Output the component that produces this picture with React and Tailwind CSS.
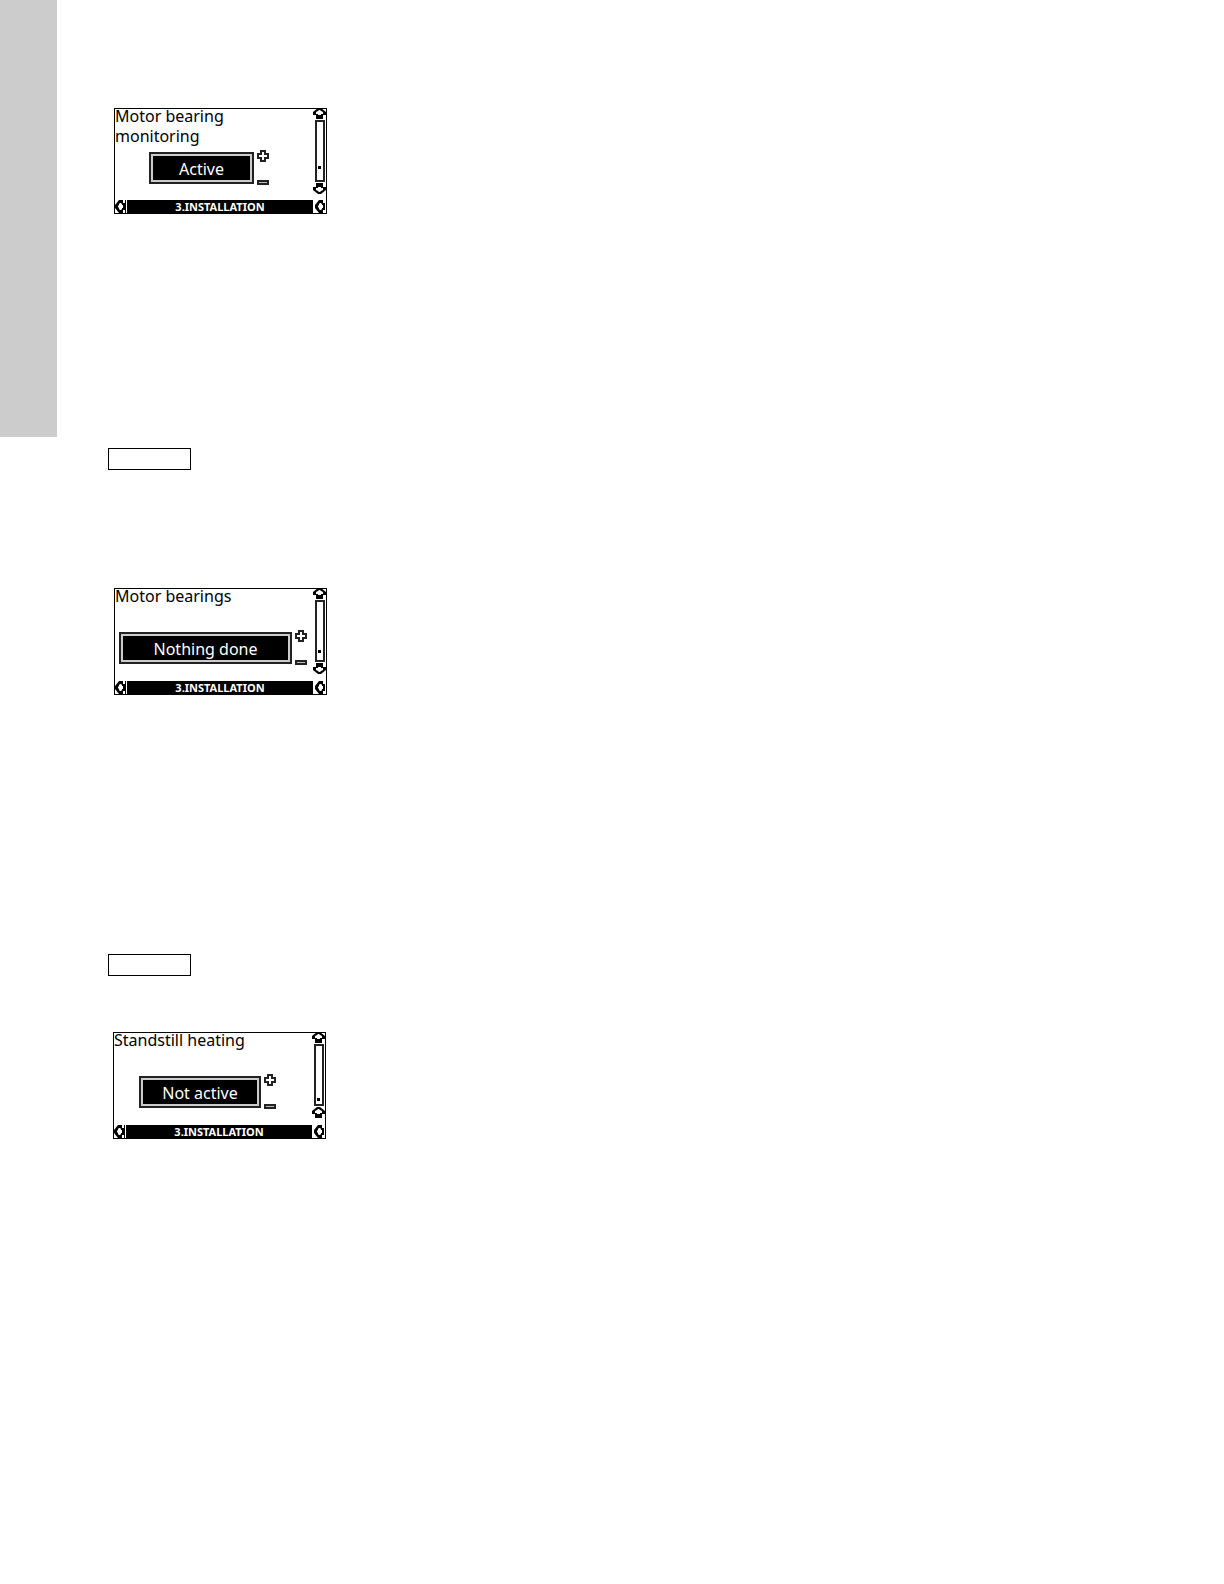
import React from "react";

const screens = [
  {
    title: "Motor bearing monitoring",
    value: "Active",
    row: "ml-[34px]",
    box: "w-[105px]",
    dot: "mb-[11px]",
    place: "ml-[6px] h-[106px]",
    lastArrow: "down",
  },
  {
    title: "Motor bearings",
    value: "Nothing done",
    row: "ml-[4px]",
    box: "w-[173px]",
    dot: "mb-[7px]",
    place: "mt-[118px] ml-[6px] h-[107px]",
    lastArrow: "down",
  },
  {
    title: "Standstill heating",
    value: "Not active",
    row: "ml-[25px]",
    box: "w-[122px]",
    dot: "mb-[3px]",
    place: "mt-[56px] ml-[5px] h-[107px]",
    lastArrow: "up",
  },
];

const Arrow = ({ down }) => (
  <svg viewBox="0 0 13 11" className={`block w-[13px] h-[11px] ${down ? "rotate-180" : ""}`}>
    <path d="M5 0H8L13 4V7H10V11H3V7H0V4Z" fill="black" />
    <path d="M5 3L6 2H7L8 3L10 4V6H8V7H5V6H3V4Z" fill="white" />
  </svg>
);

const Side = ({ divider }) => (
  <svg viewBox="0 0 11 13" className="block w-[11px] h-[13px]">
    <path d="M4 0H8V3H10V10H8V13H4L0 8V5Z" fill="black" />
    <path d="M4 4L5 3H6L7 4V5H8V8H7V9L6 10H5L4 9V8L3 7V6L4 5Z" fill="white" />
    {divider && <path d="M10 0H11V13H10Z" fill="black" />}
  </svg>
);

const Plus = () => (
  <svg viewBox="0 0 12 12" className="block w-3 h-3">
    <path d="M4 1H8V4H11V8H8V11H4V8H1V4H4Z" fill="white" stroke="#222" strokeWidth="2" />
  </svg>
);

const Minus = () => (
  <svg viewBox="0 0 12 5" className="block w-3 h-[5px]">
    <path d="M1 1H11V4H1Z" fill="#bbb" stroke="#222" strokeWidth="2" />
  </svg>
);

const Screen = ({ screen }) => (
  <section className={`w-[213px] border border-black flex flex-col ${screen.place}`}>
    <div className="flex-1 flex justify-between">
      <div>
        <h2 className="w-[150px] h-[41px] -mt-[3px] mb-[3px] text-[16px] leading-5">{screen.title}</h2>
        <div className={`flex items-center gap-[3px] ${screen.row}`}>
          <div className={`h-8 border-2 border-[#222] bg-[#ccc] p-[2px] ${screen.box}`}>
            <div className="h-full bg-black text-white text-[16px] leading-[26px] text-center">{screen.value}</div>
          </div>
          <div className="flex flex-col justify-between h-[35px]">
            <button aria-label="Increase"><Plus /></button>
            <button aria-label="Decrease"><Minus /></button>
          </div>
        </div>
      </div>
      {/* Scroll bar */}
      <div className="flex flex-col items-center h-[86px] -mt-px">
        <button aria-label="Previous"><Arrow /></button>
        <div className="flex-1 w-[10px] mt-px border-2 border-[#222] flex flex-col items-center justify-end">
          <div className={`w-[3px] h-[3px] bg-black ${screen.dot}`} />
        </div>
        <button aria-label="Next" className="mt-px"><Arrow down={screen.lastArrow === "down"} /></button>
      </div>
    </div>
    <div className="flex h-[13px]">
      <button aria-label="Back"><Side divider /></button>
      <div className="flex-1 ml-px mr-[2px] bg-black text-white text-[11px] leading-[13px] font-bold text-center">
        3.INSTALLATION
      </div>
      <button aria-label="Forward"><Side /></button>
    </div>
  </section>
);

const App = () => {
  return (
    <div className="min-h-screen bg-white text-black flex items-start font-['Noto_Sans',sans-serif]">
      <aside className="w-[57px] h-[437px] bg-[#ccc] shrink-0" />
      <main className="flex-1 pt-[108px] pl-[51px]">
        <Screen screen={screens[0]} />
        <div className="mt-[234px] w-[83px] h-[22px] border border-black" />
        <Screen screen={screens[1]} />
        <div className="mt-[259px] w-[83px] h-[22px] border border-black" />
        <Screen screen={screens[2]} />
      </main>
    </div>
  );
};

export default App;
